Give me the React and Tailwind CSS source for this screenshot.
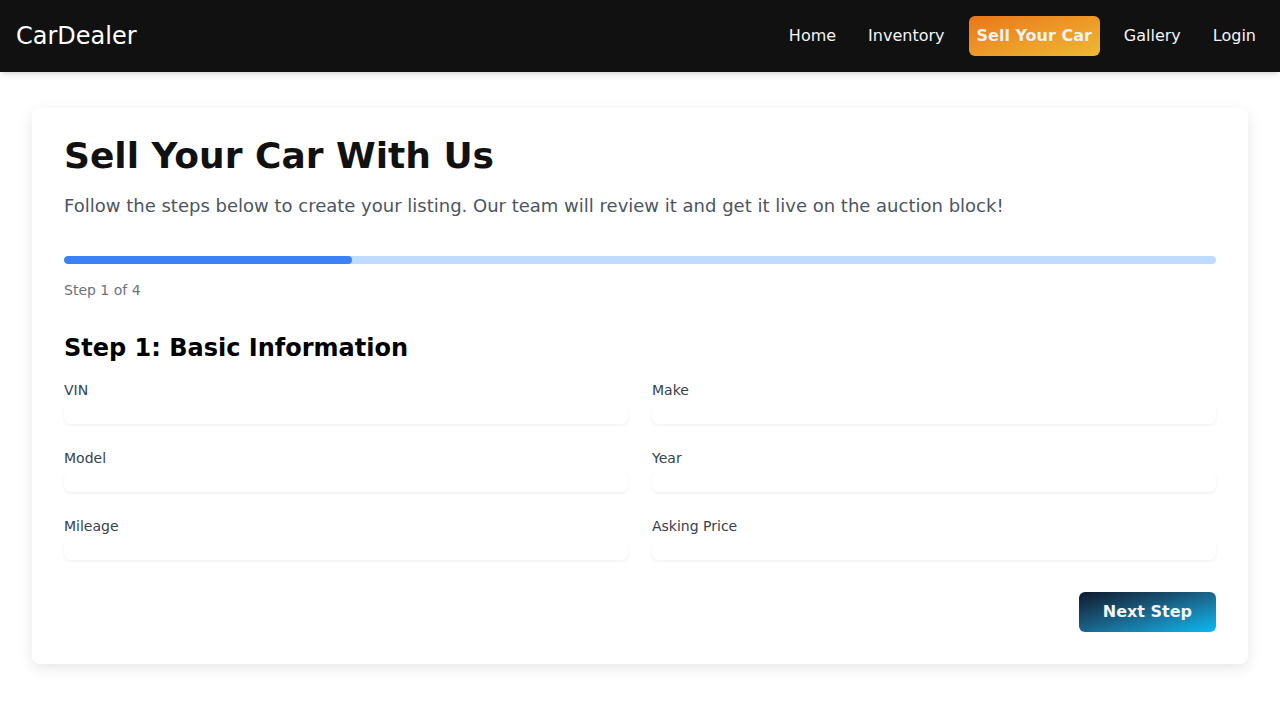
import React from "react";

const font = { fontFamily: '"DejaVu Sans", sans-serif' };

function Field({ label }) {
  return (
    <div className="flex flex-col">
      <label className="mb-1 text-sm leading-5 text-[#374151]">{label}</label>
      <input className="h-5 w-full rounded-md bg-white shadow-[0_1px_3px_rgba(0,0,0,0.07)] outline-none" />
    </div>
  );
}

export default function App() {
  return (
    <div className="min-h-[720px] bg-white" style={font}>
      <nav className="flex h-[72px] items-center justify-between bg-[#111111] px-4 shadow-md">
        <div className="text-2xl leading-8 text-white">CarDealer</div>
        <div className="flex items-center gap-4 text-base leading-6 text-[#f3f4f6]">
          <a className="px-2 py-2">Home</a>
          <a className="px-2 py-2">Inventory</a>
          <a className="rounded-md bg-linear-to-br from-[#e97619] to-[#edb934] px-2 py-2 font-bold text-[#f1f1f1]">Sell Your Car</a>
          <a className="px-2 py-2">Gallery</a>
          <a className="px-2 py-2">Login</a>
        </div>
      </nav>
      <main className="px-8 pt-9 pb-14">
        <div className="rounded-lg bg-white p-8 shadow-[0_4px_14px_rgba(0,0,0,0.1)]">
          <h1 className="mb-5 text-4xl leading-8 font-bold text-[#111111]">Sell Your Car With Us</h1>
          <p className="mb-9 text-lg leading-7 text-[#4b5563]">
            Follow the steps below to create your listing. Our team will review it and get it live on the auction block!
          </p>
          <div className="h-2 w-full overflow-hidden rounded-full bg-[#bfdbfe]">
            <div className="h-2 rounded-full bg-[#3b82f6]" style={{ width: "25%" }} />
          </div>
          <div className="mt-4 text-sm leading-5 text-[#6b7280]">Step 1 of 4</div>
          <h2 className="mt-8 mb-4 text-2xl leading-8 font-bold text-black">Step 1: Basic Information</h2>
          <div className="grid grid-cols-2 gap-x-6 gap-y-6">
            <Field label="VIN" />
            <Field label="Make" />
            <Field label="Model" />
            <Field label="Year" />
            <Field label="Mileage" />
            <Field label="Asking Price" />
          </div>
          <div className="mt-8 flex justify-end">
            <button className="rounded-md bg-linear-to-br from-[#0d1b2e] to-[#00bbf5] px-6 py-2 text-base leading-6 font-bold text-[#f3f4f6]">
              Next Step
            </button>
          </div>
        </div>
      </main>
    </div>
  );
}
